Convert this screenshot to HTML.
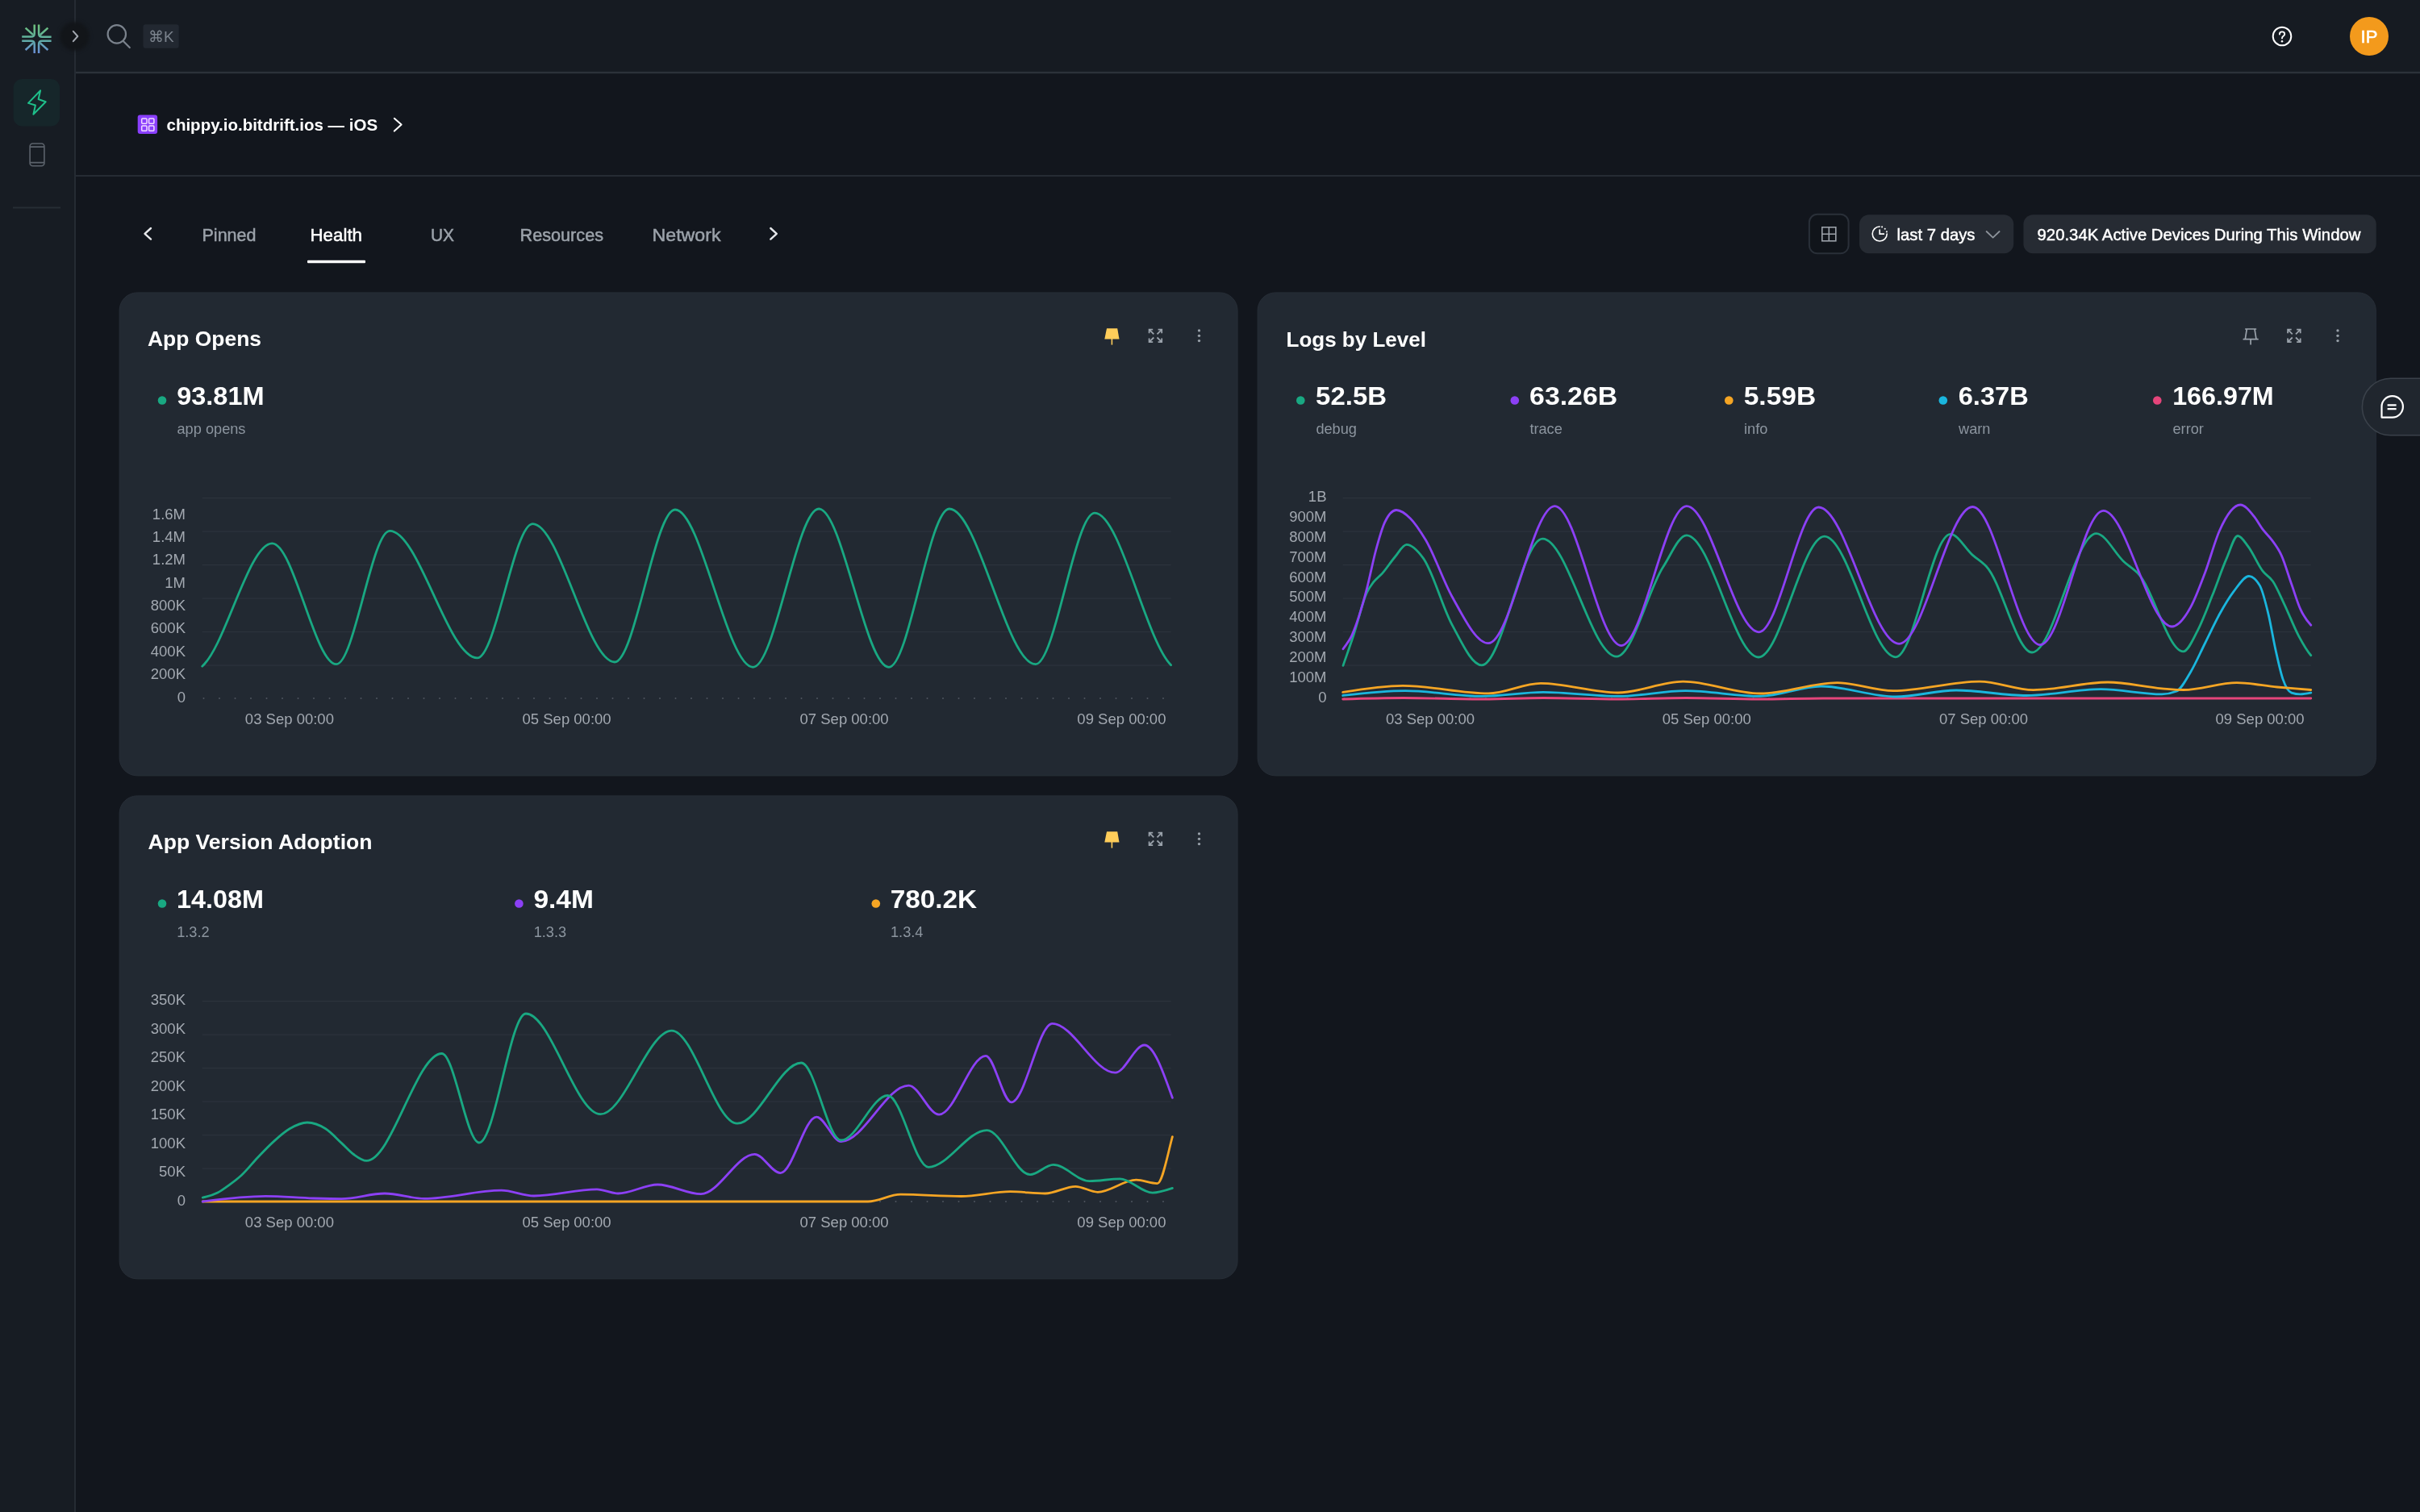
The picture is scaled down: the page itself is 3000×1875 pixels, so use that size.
<!DOCTYPE html>
<html><head><meta charset="utf-8"><title>bitdrift dashboard</title>
<style>
html,body{margin:0;padding:0;background:#12161d;width:3000px;height:1875px;overflow:hidden}
svg{display:block;font-family:"Liberation Sans", sans-serif;will-change:transform}
</style></head><body>
<svg width="3000" height="1875" viewBox="0 0 3000 1875">
<rect x="0" y="0" width="3000" height="1875" fill="#12161d"/>
<rect x="0" y="0" width="92" height="1875" fill="#171c23"/>
<rect x="94" y="0" width="2906" height="90" fill="#161b22"/>
<rect x="92" y="0" width="2" height="1875" fill="#252b33"/>
<rect x="94" y="88.8" width="2906" height="2.4" fill="#2c323a"/>
<rect x="94" y="217" width="2906" height="2" fill="#252b33"/>
<defs><linearGradient id="lg" gradientUnits="userSpaceOnUse" x1="0" y1="30" x2="0" y2="66"><filter id="bl" x="-50%" y="-50%" width="200%" height="200%"><feGaussianBlur stdDeviation="2"/></filter><stop offset="0" stop-color="#6fc27a"/><stop offset="0.5" stop-color="#5fb0a0"/><stop offset="1" stop-color="#6a8ed6"/></linearGradient></defs>
<g fill="none" stroke="url(#lg)" stroke-width="2.5" stroke-linecap="butt"><path d="M42.7,30.5 V41.5 Q42.7,45.6 38.6,45.6 H27.2"/><path d="M48.1,30.5 V41.5 Q48.1,45.8 52.4,45.8 H63.6"/><path d="M27.2,50.8 H38.6 Q42.7,50.8 42.7,54.9 V66"/><path d="M63.6,50.8 H52.4 Q48.1,50.8 48.1,54.9 V66"/><path d="M31.6,34.6 L41,43.2"/><path d="M59.4,34.6 L49.8,43.2"/><path d="M31.6,62 L41,53.4"/><path d="M59.4,62 L49.8,53.4"/></g>
<circle cx="92.5" cy="45" r="18" fill="#121519" filter="url(#bl)"/>
<path d="M90.8,38.8 L96.3,45 L90.8,51.2" fill="none" stroke="#a3a8b0" stroke-width="2" stroke-linecap="round" stroke-linejoin="round"/>
<g fill="none" stroke="#7b838d" stroke-width="2.2" stroke-linecap="round"><circle cx="144.8" cy="42.4" r="11.2"/><path d="M152.8,51 L160.8,59"/></g>
<rect x="177.5" y="30.2" width="44.2" height="29.5" rx="3" fill="#222831"/>
<text x="184" y="51.8" font-size="19" font-weight="400" fill="#7b838d" text-anchor="start" >⌘K</text>
<circle cx="2829" cy="45" r="11.3" fill="none" stroke="#fff" stroke-width="2"/>
<path d="M2825.9,42.6 Q2825.9,39.4 2829,39.4 Q2832.2,39.4 2832.2,42.2 Q2832.2,44 2830.4,44.8 Q2829,45.5 2829,47.6" fill="none" stroke="#fff" stroke-width="1.9" stroke-linecap="round"/>
<circle cx="2829" cy="51.2" r="1.25" fill="#fff"/>
<circle cx="2937" cy="45" r="24" fill="#f39a1c"/>
<text x="2937" y="52.8" font-size="22" font-weight="400" fill="#fff" text-anchor="middle" stroke="#fff" stroke-width="0.6" >IP</text>
<rect x="16.6" y="98" width="57.4" height="58.5" rx="11" fill="#16262a"/>
<path d="M50.1,112.3 L47.6,123 L56.7,126.2 L41.4,141.7 L43.9,130.5 L35,127.9 Z" fill="none" stroke="#1fbf8a" stroke-width="2" stroke-linejoin="round"/>
<g fill="none" stroke="#5c636c" stroke-width="1.6"><rect x="37.1" y="178" width="17.8" height="27.7" rx="3.5"/><path d="M37.1,182.1 H54.9 M37.1,201.6 H54.9"/></g>
<rect x="16" y="256.5" width="59" height="2" fill="#272d35"/>
<rect x="170.7" y="142.6" width="24.4" height="23.5" rx="3" fill="#8a3ffc"/>
<g fill="none" stroke="#f2dcff" stroke-width="1.5"><rect x="175.7" y="147" width="6.3" height="6.3" rx="1"/><rect x="184.6" y="147" width="6.3" height="6.3" rx="1"/><rect x="175.7" y="156" width="6.3" height="6.3" rx="1"/><rect x="184.6" y="156" width="6.3" height="6.3" rx="1"/></g>
<text x="206.5" y="161.7" font-size="20.5" font-weight="700" fill="#fff" text-anchor="start" >chippy.io.bitdrift.ios — iOS</text>
<path d="M488.8,146.8 L497.6,154.6 L488.8,162.6" fill="none" stroke="#fff" stroke-width="2" stroke-linecap="round" stroke-linejoin="round"/>
<path d="M187,283 L179.5,289.8 L187,296.6" fill="none" stroke="#e6e8eb" stroke-width="2.4" stroke-linecap="round" stroke-linejoin="round"/>
<text x="250.5" y="299" font-size="22.8" font-weight="400" fill="#9ba2aa" text-anchor="start" stroke="#9ba2aa" stroke-width="0.5" textLength="67" lengthAdjust="spacingAndGlyphs" >Pinned</text>
<text x="384.5" y="299" font-size="22.8" font-weight="400" fill="#fff" text-anchor="start" stroke="#fff" stroke-width="0.5" textLength="64.5" lengthAdjust="spacingAndGlyphs" >Health</text>
<text x="534" y="299" font-size="22.8" font-weight="400" fill="#9ba2aa" text-anchor="start" stroke="#9ba2aa" stroke-width="0.5" textLength="29" lengthAdjust="spacingAndGlyphs" >UX</text>
<text x="644.5" y="299" font-size="22.8" font-weight="400" fill="#9ba2aa" text-anchor="start" stroke="#9ba2aa" stroke-width="0.5" textLength="103.5" lengthAdjust="spacingAndGlyphs" >Resources</text>
<text x="808.5" y="299" font-size="22.8" font-weight="400" fill="#9ba2aa" text-anchor="start" stroke="#9ba2aa" stroke-width="0.5" textLength="85" lengthAdjust="spacingAndGlyphs" >Network</text>
<rect x="381" y="322.7" width="72" height="3.5" rx="1" fill="#fff"/>
<path d="M955.3,283 L962.8,289.8 L955.3,296.6" fill="none" stroke="#e6e8eb" stroke-width="2.4" stroke-linecap="round" stroke-linejoin="round"/>
<rect x="2242.9" y="265.8" width="48.7" height="48.5" rx="10" fill="#10141a" stroke="#2a3039" stroke-width="2"/>
<g fill="none" stroke="#9ba1a9" stroke-width="1.6"><rect x="2258.8" y="281.8" width="17" height="17"/><path d="M2267.3,281.8 V298.8 M2258.8,290.3 H2275.8"/></g>
<rect x="2305" y="266.2" width="191.2" height="48.1" rx="12" fill="#262b33"/>
<path d="M2330.2,281 A9,9 0 1 0 2339.2,290" fill="none" stroke="#fff" stroke-width="1.6" stroke-linecap="round"/>
<g fill="#f2f3f5"><circle cx="2333.1" cy="281.4" r="1.05"/><circle cx="2336.7" cy="283.8" r="1.05"/><circle cx="2338.9" cy="287.4" r="1.05"/></g>
<path d="M2330.2,284.4 V290.1 H2336" fill="none" stroke="#fff" stroke-width="1.7" stroke-linecap="butt" stroke-linejoin="miter"/>
<text x="2351.5" y="297.6" font-size="20.6" font-weight="400" fill="#fff" text-anchor="start" stroke="#fff" stroke-width="0.45" textLength="97" lengthAdjust="spacingAndGlyphs" >last 7 days</text>
<path d="M2462.6,287 L2470.6,294.6 L2478.6,287" fill="none" stroke="#8d939b" stroke-width="1.8" stroke-linecap="round" stroke-linejoin="round"/>
<rect x="2508.4" y="266.2" width="437.3" height="48.1" rx="12" fill="#262b33"/>
<text x="2525.5" y="297.6" font-size="20.6" font-weight="400" fill="#fff" text-anchor="start" stroke="#fff" stroke-width="0.45" textLength="401" lengthAdjust="spacingAndGlyphs" >920.34K Active Devices During This Window</text>
<rect x="148.1" y="362.9" width="1386" height="599" rx="22" fill="#222932" stroke="#272e37" stroke-width="1"/>
<rect x="1559.1" y="362.9" width="1386.2" height="599" rx="22" fill="#222932" stroke="#272e37" stroke-width="1"/>
<rect x="148.1" y="986.9" width="1386" height="599" rx="22" fill="#222932" stroke="#272e37" stroke-width="1"/>
<g transform="translate(0,0)"><path d="M1372,407.2 H1385.2 L1387.5,420.6 H1369.3 Z" fill="#ffcd5a"/><rect x="1377.6" y="420" width="1.6" height="7.6" fill="#ffcd5a"/></g>
<g transform="translate(0,0)" fill="none" stroke="#9aa2ab" stroke-width="1.8" stroke-linecap="butt"><path d="M1424.6,413.2 V408.6 H1429.2 M1424.6,408.6 L1430.3,414.3"/><path d="M1440.2,413.2 V408.6 H1435.6 M1440.2,408.6 L1434.5,414.3"/><path d="M1424.6,419.6 V424.2 H1429.2 M1424.6,424.2 L1430.3,418.5"/><path d="M1440.2,419.6 V424.2 H1435.6 M1440.2,424.2 L1434.5,418.5"/></g>
<g transform="translate(0,0)" fill="#9aa2ab"><circle cx="1486.5" cy="409.9" r="1.65"/><circle cx="1486.5" cy="416.3" r="1.65"/><circle cx="1486.5" cy="422.6" r="1.65"/></g>
<g transform="translate(1411.5,0)" fill="none" stroke="#9aa2ab" stroke-width="1.7" stroke-linecap="round"><path d="M1372.3,408 H1385 M1373.8,408 L1371.8,420.7 M1383.5,408 L1385.5,420.7 M1369.8,420.7 H1387.5 M1378.6,420.7 V426.8"/></g>
<g transform="translate(1411.5,0)" fill="none" stroke="#9aa2ab" stroke-width="1.8" stroke-linecap="butt"><path d="M1424.6,413.2 V408.6 H1429.2 M1424.6,408.6 L1430.3,414.3"/><path d="M1440.2,413.2 V408.6 H1435.6 M1440.2,408.6 L1434.5,414.3"/><path d="M1424.6,419.6 V424.2 H1429.2 M1424.6,424.2 L1430.3,418.5"/><path d="M1440.2,419.6 V424.2 H1435.6 M1440.2,424.2 L1434.5,418.5"/></g>
<g transform="translate(1411.5,0)" fill="#9aa2ab"><circle cx="1486.5" cy="409.9" r="1.65"/><circle cx="1486.5" cy="416.3" r="1.65"/><circle cx="1486.5" cy="422.6" r="1.65"/></g>
<g transform="translate(0,624)"><path d="M1372,407.2 H1385.2 L1387.5,420.6 H1369.3 Z" fill="#ffcd5a"/><rect x="1377.6" y="420" width="1.6" height="7.6" fill="#ffcd5a"/></g>
<g transform="translate(0,624)" fill="none" stroke="#9aa2ab" stroke-width="1.8" stroke-linecap="butt"><path d="M1424.6,413.2 V408.6 H1429.2 M1424.6,408.6 L1430.3,414.3"/><path d="M1440.2,413.2 V408.6 H1435.6 M1440.2,408.6 L1434.5,414.3"/><path d="M1424.6,419.6 V424.2 H1429.2 M1424.6,424.2 L1430.3,418.5"/><path d="M1440.2,419.6 V424.2 H1435.6 M1440.2,424.2 L1434.5,418.5"/></g>
<g transform="translate(0,624)" fill="#9aa2ab"><circle cx="1486.5" cy="409.9" r="1.65"/><circle cx="1486.5" cy="416.3" r="1.65"/><circle cx="1486.5" cy="422.6" r="1.65"/></g>
<text x="183" y="429" font-size="26.2" font-weight="700" fill="#fff" text-anchor="start" textLength="141" lengthAdjust="spacingAndGlyphs" >App Opens</text>
<text x="1594.5" y="430" font-size="26.2" font-weight="700" fill="#fff" text-anchor="start" textLength="173.5" lengthAdjust="spacingAndGlyphs" >Logs by Level</text>
<text x="183.5" y="1053" font-size="26.2" font-weight="700" fill="#fff" text-anchor="start" textLength="278" lengthAdjust="spacingAndGlyphs" >App Version Adoption</text>
<circle cx="201" cy="496.5" r="5.3" fill="#19a882"/>
<text x="219.2" y="502" font-size="32" font-weight="700" fill="#fff" text-anchor="start" textLength="108.4" lengthAdjust="spacingAndGlyphs" >93.81M</text>
<text x="219.5" y="538.4" font-size="18.2" font-weight="400" fill="#8c959f" text-anchor="start" >app opens</text>
<circle cx="1612.3" cy="496.5" r="5.3" fill="#19a882"/>
<text x="1631.1000000000001" y="502" font-size="32" font-weight="700" fill="#fff" text-anchor="start" textLength="88" lengthAdjust="spacingAndGlyphs" >52.5B</text>
<text x="1631.4" y="538.4" font-size="18.2" font-weight="400" fill="#8c959f" text-anchor="start" >debug</text>
<circle cx="1877.8" cy="496.5" r="5.3" fill="#8c40f5"/>
<text x="1896.1000000000001" y="502" font-size="32" font-weight="700" fill="#fff" text-anchor="start" textLength="109" lengthAdjust="spacingAndGlyphs" >63.26B</text>
<text x="1896.4" y="538.4" font-size="18.2" font-weight="400" fill="#8c959f" text-anchor="start" >trace</text>
<circle cx="2143.3" cy="496.5" r="5.3" fill="#f5a524"/>
<text x="2161.7" y="502" font-size="32" font-weight="700" fill="#fff" text-anchor="start" textLength="89.5" lengthAdjust="spacingAndGlyphs" >5.59B</text>
<text x="2162" y="538.4" font-size="18.2" font-weight="400" fill="#8c959f" text-anchor="start" >info</text>
<circle cx="2408.8" cy="496.5" r="5.3" fill="#1ab6de"/>
<text x="2427.7" y="502" font-size="32" font-weight="700" fill="#fff" text-anchor="start" textLength="87" lengthAdjust="spacingAndGlyphs" >6.37B</text>
<text x="2428" y="538.4" font-size="18.2" font-weight="400" fill="#8c959f" text-anchor="start" >warn</text>
<circle cx="2674.3" cy="496.5" r="5.3" fill="#e5457b"/>
<text x="2693.2" y="502" font-size="32" font-weight="700" fill="#fff" text-anchor="start" textLength="125.5" lengthAdjust="spacingAndGlyphs" >166.97M</text>
<text x="2693.5" y="538.4" font-size="18.2" font-weight="400" fill="#8c959f" text-anchor="start" >error</text>
<circle cx="201.0" cy="1120.5" r="5.3" fill="#19a882"/>
<text x="218.89999999999998" y="1126" font-size="32" font-weight="700" fill="#fff" text-anchor="start" textLength="108" lengthAdjust="spacingAndGlyphs" >14.08M</text>
<text x="219.2" y="1162.4" font-size="18.2" font-weight="400" fill="#8c959f" text-anchor="start" >1.3.2</text>
<circle cx="643.4" cy="1120.5" r="5.3" fill="#8c40f5"/>
<text x="661.4000000000001" y="1126" font-size="32" font-weight="700" fill="#fff" text-anchor="start" textLength="74.5" lengthAdjust="spacingAndGlyphs" >9.4M</text>
<text x="661.7" y="1162.4" font-size="18.2" font-weight="400" fill="#8c959f" text-anchor="start" >1.3.3</text>
<circle cx="1085.8" cy="1120.5" r="5.3" fill="#f5a524"/>
<text x="1103.7" y="1126" font-size="32" font-weight="700" fill="#fff" text-anchor="start" textLength="107.5" lengthAdjust="spacingAndGlyphs" >780.2K</text>
<text x="1104" y="1162.4" font-size="18.2" font-weight="400" fill="#8c959f" text-anchor="start" >1.3.4</text>
<rect x="250.7" y="617.0" width="1200.9" height="1.2" fill="#2c333c"/>
<rect x="250.7" y="658.5" width="1200.9" height="1.2" fill="#2c333c"/>
<rect x="250.7" y="700.0" width="1200.9" height="1.2" fill="#2c333c"/>
<rect x="250.7" y="741.5" width="1200.9" height="1.2" fill="#2c333c"/>
<rect x="250.7" y="783.0" width="1200.9" height="1.2" fill="#2c333c"/>
<rect x="250.7" y="824.5" width="1200.9" height="1.2" fill="#2c333c"/>
<path d="M251.7,866 h1.6 M271.2,866 h1.6 M290.7,866 h1.6 M310.2,866 h1.6 M329.7,866 h1.6 M349.2,866 h1.6 M368.7,866 h1.6 M388.2,866 h1.6 M407.7,866 h1.6 M427.2,866 h1.6 M446.7,866 h1.6 M466.2,866 h1.6 M485.7,866 h1.6 M505.2,866 h1.6 M524.7,866 h1.6 M544.2,866 h1.6 M563.7,866 h1.6 M583.2,866 h1.6 M602.7,866 h1.6 M622.2,866 h1.6 M641.7,866 h1.6 M661.2,866 h1.6 M680.7,866 h1.6 M700.2,866 h1.6 M719.7,866 h1.6 M739.2,866 h1.6 M758.7,866 h1.6 M778.2,866 h1.6 M797.7,866 h1.6 M817.2,866 h1.6 M836.7,866 h1.6 M856.2,866 h1.6 M875.7,866 h1.6 M895.2,866 h1.6 M914.7,866 h1.6 M934.2,866 h1.6 M953.7,866 h1.6 M973.2,866 h1.6 M992.7,866 h1.6 M1012.2,866 h1.6 M1031.7,866 h1.6 M1051.2,866 h1.6 M1070.7,866 h1.6 M1090.2,866 h1.6 M1109.7,866 h1.6 M1129.2,866 h1.6 M1148.7,866 h1.6 M1168.2,866 h1.6 M1187.7,866 h1.6 M1207.2,866 h1.6 M1226.7,866 h1.6 M1246.2,866 h1.6 M1265.7,866 h1.6 M1285.2,866 h1.6 M1304.7,866 h1.6 M1324.2,866 h1.6 M1343.7,866 h1.6 M1363.2,866 h1.6 M1382.7,866 h1.6 M1402.2,866 h1.6 M1421.7,866 h1.6 M1441.2,866 h1.6 " stroke="#59606a" stroke-width="1.6" fill="none"/>
<rect x="1664.7" y="617.0" width="1200.1" height="1.2" fill="#2c333c"/>
<rect x="1664.7" y="658.5" width="1200.1" height="1.2" fill="#2c333c"/>
<rect x="1664.7" y="700.0" width="1200.1" height="1.2" fill="#2c333c"/>
<rect x="1664.7" y="741.5" width="1200.1" height="1.2" fill="#2c333c"/>
<rect x="1664.7" y="783.0" width="1200.1" height="1.2" fill="#2c333c"/>
<rect x="1664.7" y="824.5" width="1200.1" height="1.2" fill="#2c333c"/>
<path d="M1665.7,866 h1.6 M1685.2,866 h1.6 M1704.7,866 h1.6 M1724.2,866 h1.6 M1743.7,866 h1.6 M1763.2,866 h1.6 M1782.7,866 h1.6 M1802.2,866 h1.6 M1821.7,866 h1.6 M1841.2,866 h1.6 M1860.7,866 h1.6 M1880.2,866 h1.6 M1899.7,866 h1.6 M1919.2,866 h1.6 M1938.7,866 h1.6 M1958.2,866 h1.6 M1977.7,866 h1.6 M1997.2,866 h1.6 M2016.7,866 h1.6 M2036.2,866 h1.6 M2055.7,866 h1.6 M2075.2,866 h1.6 M2094.7,866 h1.6 M2114.2,866 h1.6 M2133.7,866 h1.6 M2153.2,866 h1.6 M2172.7,866 h1.6 M2192.2,866 h1.6 M2211.7,866 h1.6 M2231.2,866 h1.6 M2250.7,866 h1.6 M2270.2,866 h1.6 M2289.7,866 h1.6 M2309.2,866 h1.6 M2328.7,866 h1.6 M2348.2,866 h1.6 M2367.7,866 h1.6 M2387.2,866 h1.6 M2406.7,866 h1.6 M2426.2,866 h1.6 M2445.7,866 h1.6 M2465.2,866 h1.6 M2484.7,866 h1.6 M2504.2,866 h1.6 M2523.7,866 h1.6 M2543.2,866 h1.6 M2562.7,866 h1.6 M2582.2,866 h1.6 M2601.7,866 h1.6 M2621.2,866 h1.6 M2640.7,866 h1.6 M2660.2,866 h1.6 M2679.7,866 h1.6 M2699.2,866 h1.6 M2718.7,866 h1.6 M2738.2,866 h1.6 M2757.7,866 h1.6 M2777.2,866 h1.6 M2796.7,866 h1.6 M2816.2,866 h1.6 M2835.7,866 h1.6 M2855.2,866 h1.6 " stroke="#59606a" stroke-width="1.6" fill="none"/>
<rect x="250.7" y="1241.0" width="1200.9" height="1.2" fill="#2c333c"/>
<rect x="250.7" y="1282.5" width="1200.9" height="1.2" fill="#2c333c"/>
<rect x="250.7" y="1324.0" width="1200.9" height="1.2" fill="#2c333c"/>
<rect x="250.7" y="1365.5" width="1200.9" height="1.2" fill="#2c333c"/>
<rect x="250.7" y="1407.0" width="1200.9" height="1.2" fill="#2c333c"/>
<rect x="250.7" y="1448.5" width="1200.9" height="1.2" fill="#2c333c"/>
<path d="M251.7,1490 h1.6 M271.2,1490 h1.6 M290.7,1490 h1.6 M310.2,1490 h1.6 M329.7,1490 h1.6 M349.2,1490 h1.6 M368.7,1490 h1.6 M388.2,1490 h1.6 M407.7,1490 h1.6 M427.2,1490 h1.6 M446.7,1490 h1.6 M466.2,1490 h1.6 M485.7,1490 h1.6 M505.2,1490 h1.6 M524.7,1490 h1.6 M544.2,1490 h1.6 M563.7,1490 h1.6 M583.2,1490 h1.6 M602.7,1490 h1.6 M622.2,1490 h1.6 M641.7,1490 h1.6 M661.2,1490 h1.6 M680.7,1490 h1.6 M700.2,1490 h1.6 M719.7,1490 h1.6 M739.2,1490 h1.6 M758.7,1490 h1.6 M778.2,1490 h1.6 M797.7,1490 h1.6 M817.2,1490 h1.6 M836.7,1490 h1.6 M856.2,1490 h1.6 M875.7,1490 h1.6 M895.2,1490 h1.6 M914.7,1490 h1.6 M934.2,1490 h1.6 M953.7,1490 h1.6 M973.2,1490 h1.6 M992.7,1490 h1.6 M1012.2,1490 h1.6 M1031.7,1490 h1.6 M1051.2,1490 h1.6 M1070.7,1490 h1.6 M1090.2,1490 h1.6 M1109.7,1490 h1.6 M1129.2,1490 h1.6 M1148.7,1490 h1.6 M1168.2,1490 h1.6 M1187.7,1490 h1.6 M1207.2,1490 h1.6 M1226.7,1490 h1.6 M1246.2,1490 h1.6 M1265.7,1490 h1.6 M1285.2,1490 h1.6 M1304.7,1490 h1.6 M1324.2,1490 h1.6 M1343.7,1490 h1.6 M1363.2,1490 h1.6 M1382.7,1490 h1.6 M1402.2,1490 h1.6 M1421.7,1490 h1.6 M1441.2,1490 h1.6 " stroke="#59606a" stroke-width="1.6" fill="none"/>
<text x="230" y="643.5" font-size="18.5" font-weight="400" fill="#a3a9b1" text-anchor="end" >1.6M</text>
<text x="230" y="671.9" font-size="18.5" font-weight="400" fill="#a3a9b1" text-anchor="end" >1.4M</text>
<text x="230" y="700.2" font-size="18.5" font-weight="400" fill="#a3a9b1" text-anchor="end" >1.2M</text>
<text x="230" y="728.6" font-size="18.5" font-weight="400" fill="#a3a9b1" text-anchor="end" >1M</text>
<text x="230" y="757.0" font-size="18.5" font-weight="400" fill="#a3a9b1" text-anchor="end" >800K</text>
<text x="230" y="785.4" font-size="18.5" font-weight="400" fill="#a3a9b1" text-anchor="end" >600K</text>
<text x="230" y="813.8" font-size="18.5" font-weight="400" fill="#a3a9b1" text-anchor="end" >400K</text>
<text x="230" y="842.1" font-size="18.5" font-weight="400" fill="#a3a9b1" text-anchor="end" >200K</text>
<text x="230" y="870.5" font-size="18.5" font-weight="400" fill="#a3a9b1" text-anchor="end" >0</text>
<text x="1644.5" y="622.0" font-size="18.5" font-weight="400" fill="#a3a9b1" text-anchor="end" >1B</text>
<text x="1644.5" y="646.9" font-size="18.5" font-weight="400" fill="#a3a9b1" text-anchor="end" >900M</text>
<text x="1644.5" y="671.7" font-size="18.5" font-weight="400" fill="#a3a9b1" text-anchor="end" >800M</text>
<text x="1644.5" y="696.6" font-size="18.5" font-weight="400" fill="#a3a9b1" text-anchor="end" >700M</text>
<text x="1644.5" y="721.5" font-size="18.5" font-weight="400" fill="#a3a9b1" text-anchor="end" >600M</text>
<text x="1644.5" y="746.4" font-size="18.5" font-weight="400" fill="#a3a9b1" text-anchor="end" >500M</text>
<text x="1644.5" y="771.2" font-size="18.5" font-weight="400" fill="#a3a9b1" text-anchor="end" >400M</text>
<text x="1644.5" y="796.1" font-size="18.5" font-weight="400" fill="#a3a9b1" text-anchor="end" >300M</text>
<text x="1644.5" y="821.0" font-size="18.5" font-weight="400" fill="#a3a9b1" text-anchor="end" >200M</text>
<text x="1644.5" y="845.8" font-size="18.5" font-weight="400" fill="#a3a9b1" text-anchor="end" >100M</text>
<text x="1644.5" y="870.7" font-size="18.5" font-weight="400" fill="#a3a9b1" text-anchor="end" >0</text>
<text x="230" y="1246.0" font-size="18.5" font-weight="400" fill="#a3a9b1" text-anchor="end" >350K</text>
<text x="230" y="1281.6" font-size="18.5" font-weight="400" fill="#a3a9b1" text-anchor="end" >300K</text>
<text x="230" y="1317.1" font-size="18.5" font-weight="400" fill="#a3a9b1" text-anchor="end" >250K</text>
<text x="230" y="1352.7" font-size="18.5" font-weight="400" fill="#a3a9b1" text-anchor="end" >200K</text>
<text x="230" y="1388.2" font-size="18.5" font-weight="400" fill="#a3a9b1" text-anchor="end" >150K</text>
<text x="230" y="1423.8" font-size="18.5" font-weight="400" fill="#a3a9b1" text-anchor="end" >100K</text>
<text x="230" y="1459.3" font-size="18.5" font-weight="400" fill="#a3a9b1" text-anchor="end" >50K</text>
<text x="230" y="1494.9" font-size="18.5" font-weight="400" fill="#a3a9b1" text-anchor="end" >0</text>
<text x="358.9" y="898" font-size="18.5" font-weight="400" fill="#a3a9b1" text-anchor="middle" >03 Sep 00:00</text>
<text x="702.6" y="898" font-size="18.5" font-weight="400" fill="#a3a9b1" text-anchor="middle" >05 Sep 00:00</text>
<text x="1046.6" y="898" font-size="18.5" font-weight="400" fill="#a3a9b1" text-anchor="middle" >07 Sep 00:00</text>
<text x="1390.4" y="898" font-size="18.5" font-weight="400" fill="#a3a9b1" text-anchor="middle" >09 Sep 00:00</text>
<text x="1773" y="898" font-size="18.5" font-weight="400" fill="#a3a9b1" text-anchor="middle" >03 Sep 00:00</text>
<text x="2115.8" y="898" font-size="18.5" font-weight="400" fill="#a3a9b1" text-anchor="middle" >05 Sep 00:00</text>
<text x="2459" y="898" font-size="18.5" font-weight="400" fill="#a3a9b1" text-anchor="middle" >07 Sep 00:00</text>
<text x="2801.6" y="898" font-size="18.5" font-weight="400" fill="#a3a9b1" text-anchor="middle" >09 Sep 00:00</text>
<text x="358.9" y="1522" font-size="18.5" font-weight="400" fill="#a3a9b1" text-anchor="middle" >03 Sep 00:00</text>
<text x="702.6" y="1522" font-size="18.5" font-weight="400" fill="#a3a9b1" text-anchor="middle" >05 Sep 00:00</text>
<text x="1046.6" y="1522" font-size="18.5" font-weight="400" fill="#a3a9b1" text-anchor="middle" >07 Sep 00:00</text>
<text x="1390.4" y="1522" font-size="18.5" font-weight="400" fill="#a3a9b1" text-anchor="middle" >09 Sep 00:00</text>
<path d="M250.7,826.2C279.6,800.8 308.5,673.9 337.4,673.9C363.9,673.9 390.5,823.7 417.0,823.7C439.0,823.7 461.1,658.4 483.1,658.4C519.3,658.4 555.4,815.9 591.6,815.9C614.5,815.9 637.4,649.6 660.3,649.6C694.2,649.6 728.1,821.0 762.0,821.0C787.0,821.0 811.9,632.0 836.9,632.0C869.1,632.0 901.3,827.3 933.5,827.3C960.7,827.3 987.9,631.0 1015.1,631.0C1044.0,631.0 1073.0,827.3 1101.9,827.3C1126.9,827.3 1151.8,631.0 1176.8,631.0C1212.4,631.0 1248.1,823.7 1283.7,823.7C1308.1,823.7 1332.6,636.2 1357.0,636.2C1388.5,636.2 1420.1,793.3 1451.6,824.7" fill="none" stroke="#19a882" stroke-width="2.8" stroke-linecap="round" stroke-linejoin="round"/>
<path d="M1664.7,867.0C1689.8,866.2 1714.9,865.5 1740.0,865.5C1773.3,865.5 1806.7,867.0 1840.0,867.0C1864.3,867.0 1888.7,865.5 1913.0,865.5C1943.7,865.5 1974.3,867.0 2005.0,867.0C2033.3,867.0 2061.7,865.5 2090.0,865.5C2120.0,865.5 2150.0,867.0 2180.0,867.0C2206.7,867.0 2233.3,866.0 2260.0,866.0C2461.6,866.0 2663.2,866.0 2864.8,866.0" fill="none" stroke="#e5457b" stroke-width="2.8" stroke-linecap="round" stroke-linejoin="round"/>
<path d="M1664.7,862.5C1690.5,859.6 1716.2,856.7 1742.0,856.7C1773.9,856.7 1805.8,863.4 1837.7,863.4C1862.8,863.4 1887.9,858.4 1913.0,858.4C1943.8,858.4 1974.7,863.4 2005.5,863.4C2033.5,863.4 2061.4,856.7 2089.4,856.7C2120.3,856.7 2151.1,863.4 2182.0,863.4C2207.1,863.4 2232.3,851.0 2257.4,851.0C2288.3,851.0 2319.1,864.0 2350.0,864.0C2375.0,864.0 2400.0,856.0 2425.0,856.0C2454.0,856.0 2483.0,862.5 2512.0,862.5C2542.8,862.5 2573.7,854.7 2604.5,854.7C2629.7,854.7 2654.8,860.9 2680.0,860.9C2686.0,860.9 2691.9,859.7 2697.9,857.3C2703.8,854.9 2709.8,843.1 2715.7,833.2C2721.7,823.2 2727.6,809.4 2733.6,797.5C2739.5,785.6 2745.5,772.5 2751.4,761.8C2757.4,751.0 2763.3,741.0 2769.3,733.2C2775.5,725.1 2781.8,714.5 2788.0,714.5C2792.5,714.5 2796.9,718.4 2801.4,726.1C2805.0,732.3 2808.5,746.8 2812.1,761.8C2815.1,774.4 2818.1,793.0 2821.1,806.4C2824.1,819.7 2827.0,833.5 2830.0,842.1C2833.6,852.5 2837.1,857.9 2840.7,859.1C2844.3,860.3 2847.8,860.9 2851.4,860.9C2855.9,860.9 2860.3,860.0 2864.8,859.1" fill="none" stroke="#1ab6de" stroke-width="2.8" stroke-linecap="round" stroke-linejoin="round"/>
<path d="M1664.7,858.4C1689.5,854.3 1714.2,850.3 1739.0,850.3C1774.3,850.3 1809.7,859.9 1845.0,859.9C1866.7,859.9 1888.3,847.4 1910.0,847.4C1941.8,847.4 1973.7,859.0 2005.5,859.0C2032.5,859.0 2059.5,845.1 2086.5,845.1C2118.3,845.1 2150.2,860.0 2182.0,860.0C2213.9,860.0 2245.7,846.6 2277.6,846.6C2300.7,846.6 2323.9,856.7 2347.0,856.7C2382.7,856.7 2418.3,845.1 2454.0,845.1C2476.2,845.1 2498.4,855.6 2520.6,855.6C2551.4,855.6 2582.2,846.0 2613.0,846.0C2635.3,846.0 2657.7,852.0 2680.0,853.8C2688.9,854.5 2697.9,855.5 2706.8,855.5C2728.8,855.5 2750.9,846.6 2772.9,846.6C2789.6,846.6 2806.2,850.4 2822.9,852.0C2836.9,853.3 2850.8,854.4 2864.8,855.5" fill="none" stroke="#f5a524" stroke-width="2.8" stroke-linecap="round" stroke-linejoin="round"/>
<path d="M1665.0,825.4C1669.5,812.2 1674.1,799.6 1678.6,785.7C1683.9,769.6 1689.1,746.1 1694.4,734.9C1697.1,729.2 1699.7,725.8 1702.4,722.2C1706.1,717.2 1709.8,715.2 1713.5,711.1C1718.8,705.2 1724.1,696.7 1729.4,690.5C1734.2,684.9 1738.9,675.4 1743.7,675.4C1750.6,675.4 1757.4,682.8 1764.3,692.1C1776.2,708.3 1788.1,752.6 1800.0,774.6C1812.3,797.2 1824.5,824.9 1836.8,824.9C1862.0,824.9 1887.1,668.1 1912.3,668.1C1942.9,668.1 1973.4,814.2 2004.0,814.2C2023.3,814.2 2042.6,732.5 2061.9,702.8C2071.5,688.0 2081.2,663.8 2090.8,663.8C2120.5,663.8 2150.3,815.0 2180.0,815.0C2207.2,815.0 2234.5,665.2 2261.7,665.2C2291.1,665.2 2320.6,814.8 2350.0,814.8C2372.6,814.8 2395.3,662.3 2417.9,662.3C2427.1,662.3 2436.2,680.4 2445.4,688.4C2451.2,693.5 2456.9,696.6 2462.7,702.8C2481.5,723.1 2500.2,809.0 2519.0,809.0C2545.6,809.0 2572.1,661.7 2598.7,661.7C2610.3,661.7 2621.8,686.7 2633.4,697.0C2639.2,702.2 2645.0,705.4 2650.8,711.5C2669.3,730.9 2687.9,807.9 2706.4,807.9C2712.5,807.9 2718.5,793.1 2724.6,781.4C2730.6,769.9 2736.5,753.5 2742.5,738.6C2748.5,723.7 2754.4,705.6 2760.4,692.1C2765.0,681.7 2769.5,664.5 2774.1,664.5C2778.4,664.5 2782.8,672.2 2787.1,677.9C2793.1,685.7 2799.0,700.5 2805.0,708.2C2809.2,713.6 2813.3,714.6 2817.5,720.7C2822.3,727.7 2827.0,739.3 2831.8,749.3C2837.7,761.7 2843.7,777.5 2849.6,788.6C2854.7,798.1 2859.7,807.1 2864.8,812.7" fill="none" stroke="#19a882" stroke-width="2.8" stroke-linecap="round" stroke-linejoin="round"/>
<path d="M1665.0,804.8C1668.5,799.5 1671.9,796.3 1675.4,788.9C1677.5,784.4 1679.6,778.9 1681.7,773.0C1685.9,761.1 1690.2,746.5 1694.4,730.2C1698.1,715.9 1701.9,696.3 1705.6,682.5C1709.3,668.8 1713.0,655.4 1716.7,647.6C1721.5,637.5 1726.2,632.5 1731.0,632.5C1736.8,632.5 1742.6,637.2 1748.4,642.9C1754.8,649.2 1761.1,659.1 1767.5,669.8C1778.3,688.0 1789.2,720.3 1800.0,739.7C1815.0,766.5 1830.0,797.7 1845.0,797.7C1872.5,797.7 1899.9,627.6 1927.4,627.6C1954.9,627.6 1982.3,800.6 2009.8,800.6C2036.8,800.6 2063.8,627.6 2090.8,627.6C2120.7,627.6 2150.6,783.8 2180.5,783.8C2205.2,783.8 2229.8,629.0 2254.5,629.0C2287.8,629.0 2321.0,798.3 2354.3,798.3C2384.7,798.3 2415.0,628.5 2445.4,628.5C2473.4,628.5 2501.3,799.7 2529.3,799.7C2555.3,799.7 2581.4,633.4 2607.4,633.4C2635.8,633.4 2664.1,777.0 2692.5,777.0C2700.2,777.0 2708.0,766.9 2715.7,752.9C2721.7,742.1 2727.6,725.8 2733.6,710.0C2739.5,694.3 2745.5,671.4 2751.4,658.2C2760.0,638.9 2768.7,626.0 2777.3,626.0C2783.0,626.0 2788.6,633.3 2794.3,640.4C2797.9,644.8 2801.4,651.6 2805.0,656.4C2808.6,661.1 2812.1,664.1 2815.7,668.9C2819.9,674.6 2824.0,679.4 2828.2,688.6C2832.4,697.8 2836.5,712.5 2840.7,724.3C2844.3,734.4 2847.8,746.5 2851.4,754.6C2855.9,764.7 2860.3,770.4 2864.8,775.2" fill="none" stroke="#8c40f5" stroke-width="2.8" stroke-linecap="round" stroke-linejoin="round"/>
<path d="M251.2,1490.0C526.1,1490.0 801.1,1490.0 1076.0,1490.0C1089.5,1490.0 1102.9,1481.2 1116.4,1481.2C1141.5,1481.2 1166.5,1483.5 1191.6,1483.5C1211.8,1483.5 1232.1,1477.7 1252.3,1477.7C1266.8,1477.7 1281.2,1480.0 1295.7,1480.0C1308.2,1480.0 1320.8,1471.3 1333.3,1471.3C1342.5,1471.3 1351.6,1478.3 1360.8,1478.3C1376.7,1478.3 1392.6,1463.2 1408.5,1463.2C1417.2,1463.2 1425.9,1467.6 1434.6,1467.6C1440.9,1467.6 1447.1,1432.9 1453.4,1409.7" fill="none" stroke="#f5a524" stroke-width="2.8" stroke-linecap="round" stroke-linejoin="round"/>
<path d="M251.2,1490.0C277.2,1486.6 303.3,1483.3 329.3,1483.3C349.1,1483.3 369.0,1485.5 388.8,1486.0C400.4,1486.3 411.9,1486.6 423.5,1486.6C441.3,1486.6 459.1,1480.0 476.9,1480.0C493.3,1480.0 509.6,1486.4 526.0,1486.4C557.8,1486.4 589.7,1476.2 621.5,1476.2C635.0,1476.2 648.5,1483.0 662.0,1483.0C688.0,1483.0 714.0,1474.8 740.0,1474.8C748.7,1474.8 757.4,1480.0 766.1,1480.0C782.5,1480.0 798.9,1469.0 815.3,1469.0C833.2,1469.0 851.1,1480.6 869.0,1480.6C891.2,1480.6 913.4,1431.4 935.6,1431.4C946.2,1431.4 956.8,1454.6 967.4,1454.6C982.3,1454.6 997.3,1385.1 1012.2,1385.1C1022.3,1385.1 1032.5,1415.5 1042.6,1415.5C1070.6,1415.5 1098.5,1346.1 1126.5,1346.1C1139.0,1346.1 1151.6,1382.2 1164.1,1382.2C1183.4,1382.2 1202.7,1309.3 1222.0,1309.3C1232.6,1309.3 1243.2,1366.9 1253.8,1366.9C1270.7,1366.9 1287.5,1269.4 1304.4,1269.4C1330.4,1269.4 1356.5,1330.2 1382.5,1330.2C1394.6,1330.2 1406.6,1296.0 1418.7,1296.0C1430.3,1296.0 1441.8,1328.7 1453.4,1361.4" fill="none" stroke="#8c40f5" stroke-width="2.8" stroke-linecap="round" stroke-linejoin="round"/>
<path d="M251.2,1485.1C257.4,1483.9 263.6,1482.3 269.8,1479.1C274.7,1476.6 279.7,1472.8 284.6,1469.2C289.6,1465.6 294.5,1461.9 299.5,1457.3C306.1,1451.2 312.8,1442.5 319.4,1435.5C326.0,1428.6 332.6,1421.5 339.2,1415.6C345.8,1409.6 352.4,1403.7 359.0,1399.8C366.3,1395.5 373.6,1392.0 380.9,1392.0C388.5,1392.0 396.1,1394.9 403.7,1399.8C410.3,1404.0 416.9,1411.5 423.5,1417.6C428.5,1422.2 433.4,1427.9 438.4,1431.5C443.7,1435.3 449.0,1439.4 454.3,1439.4C485.4,1439.4 516.6,1306.5 547.7,1306.5C563.1,1306.5 578.6,1417.0 594.0,1417.0C613.3,1417.0 632.6,1257.0 651.9,1257.0C682.7,1257.0 713.6,1381.7 744.4,1381.7C773.8,1381.7 803.3,1278.1 832.7,1278.1C859.8,1278.1 886.8,1393.2 913.9,1393.2C940.4,1393.2 966.9,1318.0 993.4,1318.0C1009.8,1318.0 1026.2,1414.0 1042.6,1414.0C1061.9,1414.0 1081.2,1358.5 1100.5,1358.5C1117.3,1358.5 1134.2,1447.3 1151.0,1447.3C1175.1,1447.3 1199.3,1401.6 1223.4,1401.6C1241.3,1401.6 1259.1,1456.6 1277.0,1456.6C1286.6,1456.6 1296.2,1444.4 1305.8,1444.4C1320.8,1444.4 1335.7,1464.7 1350.7,1464.7C1363.2,1464.7 1375.8,1461.8 1388.3,1461.8C1401.8,1461.8 1415.3,1479.1 1428.8,1479.1C1437.0,1479.1 1445.2,1476.2 1453.4,1473.4" fill="none" stroke="#19a882" stroke-width="2.8" stroke-linecap="round" stroke-linejoin="round"/>
<path d="M3002,469.3 H2963.6 A35.25,35.25 0 0 0 2963.6,539.8 H3002 Z" fill="#20262e" stroke="#3a414a" stroke-width="1.6"/>
<path d="M2952.5,517.6 V504.4 A13.2,13.2 0 1 1 2965.7,517.6 Z" fill="none" stroke="#fff" stroke-width="2.2" stroke-linejoin="round"/>
<path d="M2959.6,502.4 H2970.6 M2959.6,507.1 H2970.6" stroke="#fff" stroke-width="2.2" stroke-linecap="butt"/>
</svg>
</body></html>
